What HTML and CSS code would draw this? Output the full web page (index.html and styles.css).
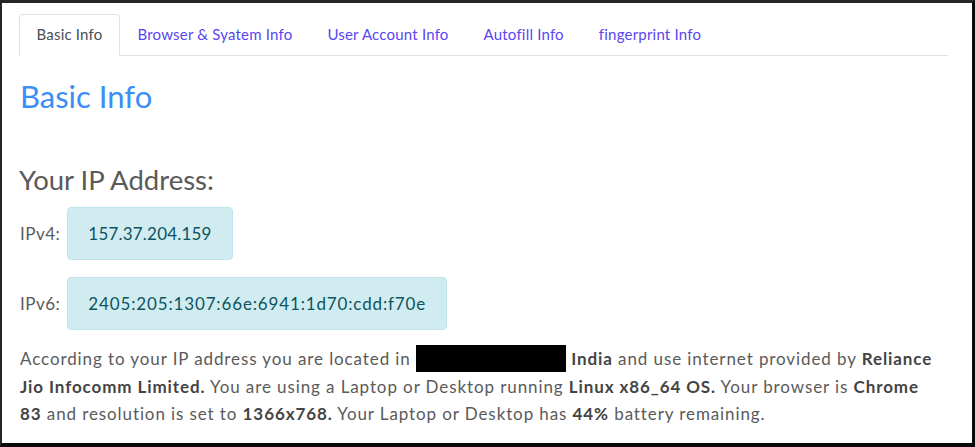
FILE: index.html
```html
<!DOCTYPE html>
<html>
<head>
<meta charset="utf-8">
<link rel="stylesheet" href="styles.css">
</head>
<body>
<div class="frame">
  <div class="container">
    <ul class="tabs">
      <li class="tab active">Basic Info</li>
      <li class="tab">Browser &amp; Syatem Info</li>
      <li class="tab">User Account Info</li>
      <li class="tab">Autofill Info</li>
      <li class="tab">fingerprint Info</li>
    </ul>
    <h1 class="title">Basic Info</h1>
    <h2 class="subtitle">Your IP Address:</h2>
    <div class="ip-row">
      <span class="ip-label">IPv4:</span>
      <div class="ip-box">157.37.204.159</div>
    </div>
    <div class="ip-row">
      <span class="ip-label">IPv6:</span>
      <div class="ip-box ip-box-wide">2405:205:1307:66e:6941:1d70:cdd:f70e</div>
    </div>
    <p class="summary">According to your IP address you are located in <span class="redacted"></span> <b>India</b> and use internet provided by <b>Reliance Jio Infocomm Limited.</b> You are using a Laptop or Desktop running <b>Linux x86_64 OS.</b> Your browser is <b>Chrome 83</b> and resolution is set to <b>1366x768.</b> Your Laptop or Desktop has <b>44%</b> battery remaining.</p>
  </div>
</div>
</body>
</html>
```

FILE: styles.css
```css
html, body {
  margin: 0;
  padding: 0;
  background: #111;
}
.frame {
  width: 975px;
  height: 447px;
  box-sizing: border-box;
  background: #fff;
  border-top: 3px solid #262626;
  border-left: 2px solid #262626;
  border-right: 3px solid #0a0a0a;
  border-bottom: 4px solid #0a0a0a;
  overflow: hidden;
  font-family: "Lato", "Noto Sans", sans-serif;
  color: #5a5a5a;
}
.container {
  padding: 11px 24px 0 17px;
}
.tabs {
  list-style: none;
  margin: 0;
  padding: 0;
  display: flex;
  border-bottom: 1px solid #dee2e6;
}
.tab {
  height: 40px;
  line-height: 39px;
  padding: 0 16.5px;
  font-size: 15px;
  letter-spacing: 0.2px;
  color: #5a46f2;
  border: 1px solid transparent;
  border-radius: 4px 4px 0 0;
  margin-bottom: -1px;
}
.tab.active {
  color: #495057;
  border-color: #dee2e6 #dee2e6 #fff;
  background: #fff;
}
.title {
  margin: 21px 0 0 1px;
  font-size: 31px;
  line-height: 38px;
  font-weight: 400;
  color: #3a8ef6;
}
.subtitle {
  margin: 49px 0 0 0;
  font-size: 27.5px;
  line-height: 32px;
  font-weight: 400;
  color: #5a5a5a;
}
.ip-row {
  display: flex;
  align-items: center;
  gap: 7px;
  margin-top: 11px;
  margin-left: 1px;
}
.ip-row + .ip-row {
  margin-top: 17px;
}
.ip-label {
  font-size: 17px;
  letter-spacing: 0.5px;
}
.ip-box {
  background: #d1ecf1;
  border: 1px solid #bee5eb;
  border-radius: 4px;
  color: #0c5460;
  font-size: 17px;
  letter-spacing: 0.2px;
  line-height: 25px;
  padding: 13px 20px;
}
.ip-box-wide {
  letter-spacing: 0.85px;
}
.summary {
  margin: 15px 9px 0 1px;
  font-size: 17px;
  line-height: 27.5px;
  letter-spacing: 0.9px;
}
.summary b {
  color: #444;
  font-weight: 700;
}
.redacted {
  display: inline-block;
  width: 150px;
  height: 27px;
  background: #000;
  vertical-align: -7px;
}
```
